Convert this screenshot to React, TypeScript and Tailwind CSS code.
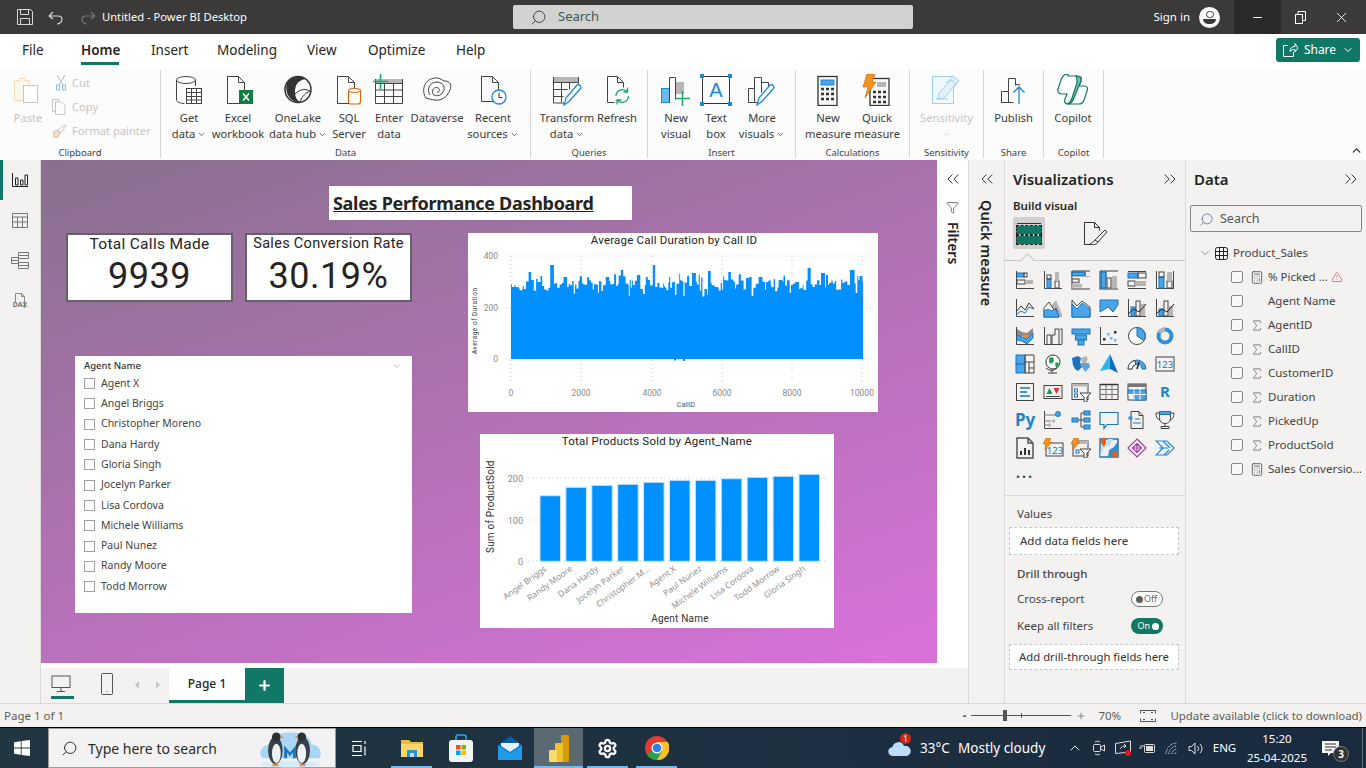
import type { ReactNode } from "react"
import { ChevronDown, ChevronUp, Minus, X, Plus, Search, ChevronsLeft, ChevronsRight, Filter, Sigma, Calculator, TriangleAlert, Settings } from "lucide-react"

const INK = "#444"
const BLUE = "#4aa5e8"
const GRAY = "#b8b6b4"

const Ic = ({ children, w = 32, h = 32 }: { children: ReactNode; w?: number; h?: number }) => (
  <svg width={w} height={h} viewBox={`0 0 ${w} ${h}`} fill="none" stroke={INK} strokeWidth="1">
    {children}
  </svg>
)

const ribbonIcons: Record<string, ReactNode> = {
  paste: (
    <Ic>
      <path d="M2.5 6.5h5v-2h5v2h5v5h-6v15h-9z" stroke="#f6dcb8" fill="#fdf6ec" />
      <rect x="11.5" y="11.5" width="14" height="17" stroke="#c8c6c4" fill="#fff" />
    </Ic>
  ),
  getData: (
    <Ic>
      <ellipse cx="13" cy="6" rx="9.5" ry="3.5" />
      <path d="M3.5 6v20c0 2 4 3.5 8 3.5M22.5 6v6" />
      <rect x="13.5" y="14.5" width="15" height="15" fill="#fff" />
      <path d="M13.5 18.5h15M13.5 22.5h15M13.5 26h15M18.5 14.5v15M23.5 14.5v15" />
    </Ic>
  ),
  excel: (
    <Ic>
      <path d="M5.5 2.5h11l6 6v21h-17zM16.5 2.5v6h6" />
      <rect x="17" y="16" width="14" height="14" fill="#107c41" stroke="none" />
      <path d="M21 19.5l6 7M27 19.5l-6 7" stroke="#fff" strokeWidth="1.6" />
    </Ic>
  ),
  onelake: (
    <Ic>
      <circle cx="16" cy="15.5" r="13" stroke="#333" strokeWidth="1.5" />
      <path d="M5 9C9 2 20 1 24 5 16 6 13 11 13 18 13 24 16 27 18 28 9 29 2 19 5 9z" fill="#333" stroke="none" />
      <path d="M13 20c6-6 11-5 15-3M18 28c2-6 6-9 10-11" stroke="#333" />
    </Ic>
  ),
  sql: (
    <Ic>
      <path d="M4.5 2.5h11l6 6v21h-17zM15.5 2.5v6h6" />
      <rect x="15.5" y="15" width="12" height="15" rx="2.5" fill="#fff" stroke="#d9660b" strokeWidth="1.2" />
      <ellipse cx="21.5" cy="16.5" rx="6" ry="2" fill="#fff" stroke="#d9660b" />
    </Ic>
  ),
  enter: (
    <Ic>
      <rect x="2.5" y="5" width="27" height="4" fill={GRAY} stroke="none" />
      <path d="M2.5 9.5h27v20h-27zM2.5 16h27M2.5 22.5h27M11.5 9.5v20M20.5 9.5v20M2.5 5v5M29.5 5v5" />
      <path d="M7.5 0v15M0 7.5h15" stroke="#17a86b" strokeWidth="1.6" />
    </Ic>
  ),
  dataverse: (
    <Ic>
      <path d="M5 24C0 17 3 5 14 4c6-.5 7 3 10 3 5 0 7 4 5 9-3 8-10 11-15 10-4-.7-6-1-9-2z" />
      <path d="M9 21c-4-6 0-13 7-13 6 0 9 6 6 10-2 4-8 5-10 2-2-4 2-8 5-6 3 1 1 5-1 4" />
    </Ic>
  ),
  recent: (
    <Ic>
      <path d="M4.5 2.5h11l6 6v19h-17zM15.5 2.5v6h6" />
      <circle cx="22" cy="23" r="7" fill="#fff" stroke="#1b8ad3" strokeWidth="1.3" />
      <path d="M22 19v4.5h3.5" stroke="#333" />
    </Ic>
  ),
  transform: (
    <Ic>
      <rect x="2" y="3" width="26" height="5" fill={GRAY} stroke="none" />
      <path d="M2.5 3v26h12M2.5 8.5h25v7M2.5 15.5h14M2.5 22.5h10M10.5 8.5v20M18.5 8.5v7M27.5 3v5" />
      <path d="M13 31l2-7L26 11c1.5-1.5 5 1.5 3.5 3.5L18 27.5z" fill="#fff" stroke="#1b8ad3" strokeWidth="1.3" />
    </Ic>
  ),
  refresh: (
    <Ic>
      <path d="M6.5 2.5h10l6 6v5M16.5 2.5v6h6M6.5 2.5v26h7" />
      <path d="M15 22a6.5 6.5 0 0 1 11-4.5M27.5 22a6.5 6.5 0 0 1-11 4.5M26.5 13.500v4.5h-4M16 30.5V26h4.5" stroke="#17a86b" strokeWidth="1.3" />
    </Ic>
  ),
  newVisual: (
    <Ic>
      <rect x="1.5" y="14.5" width="8" height="14" fill="#6bb7ee" stroke="#1b8ad3" />
      <path d="M9.5 28.5V3.5h6v22" />
      <rect x="16" y="8" width="8" height="12" fill={GRAY} stroke="none" />
      <path d="M22.5 17v15M15 24.5h15" stroke="#17a86b" strokeWidth="1.5" />
    </Ic>
  ),
  textBox: (
    <svg width="32" height="32" viewBox="0 0 32 32" fill="none">
      <rect x="2.5" y="2.5" width="27" height="27" stroke="#333" />
      <rect x="0" y="0" width="4" height="4" fill="#1b8ad3" />
      <rect x="28" y="0" width="4" height="4" fill="#1b8ad3" />
      <rect x="0" y="28" width="4" height="4" fill="#1b8ad3" />
      <rect x="28" y="28" width="4" height="4" fill="#1b8ad3" />
      <text x="16" y="23" textAnchor="middle" fontSize="20" fill="#1b8ad3" fontFamily="Liberation Sans">A</text>
    </svg>
  ),
  moreVisuals: (
    <Ic>
      <path d="M2.5 28.5v-14h6v14zM8.5 14.5v-11h7v15M15.5 8.5h7v4M8.5 28.5h5" />
      <path d="M11 31l2-7L24 11c1.5-1.5 5 1.5 3.5 3.5L16 27.5z" fill="#fff" stroke="#1b8ad3" strokeWidth="1.3" />
    </Ic>
  ),
  newMeasure: (
    <Ic>
      <rect x="6" y="2.5" width="19" height="29" stroke="#333" strokeWidth="1.3" />
      <rect x="9" y="6" width="13" height="5" fill="#4aa5e8" stroke="#1b8ad3" />
      <path d="M9 15h3M14 15h3M19 15h3M9 20h3M14 20h3M19 20h3M9 25h3M14 25h3M19 25h3" stroke="#333" strokeWidth="2.5" />
    </Ic>
  ),
  quickMeasure: (
    <Ic>
      <rect x="9" y="4.5" width="19" height="27" stroke="#333" strokeWidth="1.3" />
      <rect x="16" y="8" width="9" height="5" fill={GRAY} stroke="none" />
      <path d="M12 18h3M17 18h3M22 18h3M12 23h3M17 23h3M22 23h3M12 28h3M17 28h3M22 28h3" stroke="#333" strokeWidth="2.5" />
      <path d="M6 0h8l-3 8h4L4 24l3-11H2z" fill="#f7941d" stroke="#b95e00" strokeWidth="0.6" />
    </Ic>
  ),
  sensitivity: (
    <Ic>
      <rect x="1.5" y="2.5" width="21" height="27" stroke="#9dd0ef" fill="#f2f9fd" />
      <path d="M8 19L20 6l5 4-12 14-6 1zM15 9l7-7 6 5-6 7" stroke="#9dd0ef" fill="#e2f2fb" />
      <path d="M5 25h12" stroke="#9dd0ef" />
    </Ic>
  ),
  publish: (
    <Ic>
      <path d="M3.5 28.5v-11h7v11zM10.5 17.5v-13h7v7M17.5 10.5h4v1M3.5 28.5h12" />
      <path d="M21 30V13M15.5 18.5L21 13l5.5 5.5" stroke="#1b8ad3" strokeWidth="1.3" />
    </Ic>
  ),
  copilot: (
    <svg width="34" height="32" viewBox="0 0 34 32" fill="none" stroke="#117865" strokeWidth="1.2">
      <path d="M12 2h10c3 0 4 2 3 5l-2 5h5c3 0 4 2 3 5l-3 9c-1 3-3 4-5 4H12c-3 0-4-2-3-5l2-5H6c-3 0-5-2-4-5l3-9c1-3 3-6 7-6z" fill="#fff" />
      <path d="M20 2c3 0 6 2 5 5l-7 17c-1 3-3 6-7 6 3-1 4-3 5-6l5-15c0-3 0-6-1-7z" fill="#7ebfa8" />
    </svg>
  ),
}

const RibbonBtn = ({ w, icon, lines, chev, dim }: { w: number; icon: string; lines: string[]; chev?: boolean; dim?: boolean }) => (
  <div style={{ width: w }} className={`flex flex-col items-center shrink-0 ${dim ? "text-[#c8c6c4]" : "text-[#3b3a39]"}`}>
    <div className="h-[40px] flex items-center justify-center">{ribbonIcons[icon]}</div>
    {lines.map((l, i) => (
      <div key={i} className="h-4 leading-4 text-[11.2px] whitespace-nowrap flex items-center gap-[2px]">
        {l}
        {chev && i === lines.length - 1 && <ChevronDown size={9} strokeWidth={2} />}
      </div>
    ))}
  </div>
)

const Group = ({ w, label, children }: { w: number; label: string; children: ReactNode }) => (
  <div style={{ width: w }} className="h-[88px] shrink-0 flex flex-col border-r border-[#d9d7d5]">
    <div className="flex-1 flex items-start">{children}</div>
    <div className="h-[10px] text-center text-[9.5px] leading-[10px] text-[#444]">{label}</div>
  </div>
)

const tabs: [string, number][] = [
  ["File", 59],
  ["Home", 70],
  ["Insert", 66],
  ["Modeling", 90],
  ["View", 61],
  ["Optimize", 88],
  ["Help", 60],
]

function TitleBar() {
  return (
    <div className="h-[34px] bg-[#3b3a39] flex items-center text-white shrink-0">
      <div className="w-[48px] pl-[17px]">
        <svg width="16" height="16" viewBox="0 0 16 16" fill="none" stroke="#d8d8d8">
          <path d="M.5.5h13l2 2v13H.5zM3.5.5v5h8v-5M3.5 15.5v-6h9v6" />
        </svg>
      </div>
      <div className="w-[32px]">
        <svg width="16" height="16" viewBox="0 0 16 16" fill="none" stroke="#d8d8d8" strokeWidth="1.2">
          <path d="M1 7l4-4M1 7l4 3M1 7h9c3 0 4 2 4 3.5S12 15 9 15" />
        </svg>
      </div>
      <div className="w-[22px]">
        <svg width="16" height="16" viewBox="0 0 16 16" fill="none" stroke="#777" strokeWidth="1.2">
          <path d="M15 7l-4-4M15 7l-4 3M15 7H6c-3 0-4 2-4 3.5S4 15 7 15" />
        </svg>
      </div>
      <div className="w-[411px] text-[11.2px]">Untitled - Power BI Desktop</div>
      <div className="w-[400px] h-[24px] bg-[#d2d2d0] rounded-[2px] flex items-center pl-[17px] gap-[11px] text-[13px] text-[#3a5a58]">
        <Search size={17} strokeWidth={1.2} className="text-[#333] -scale-x-100" />
        Search
      </div>
      <div className="w-[277px] text-right text-[11.5px]">Sign in</div>
      <div className="w-[30px] pl-[9px]">
        <div className="w-[21px] h-[21px] rounded-full bg-white flex flex-col items-center justify-center gap-[1px]">
          <div className="w-[8px] h-[7px] rounded-full border border-[#3b3a39]" />
          <div className="w-[13px] h-[5px] rounded-b-full bg-[#3b3a39]" />
        </div>
      </div>
      <div className="ml-[14px] w-[47px] h-full bg-[#2b2a29] flex items-center justify-center">
        <Minus size={13} />
      </div>
      <div className="w-[38px] flex justify-center">
        <svg width="11" height="13" viewBox="0 0 11 13" fill="none" stroke="#fff">
          <rect x="0.5" y="3.5" width="7" height="9" />
          <path d="M3 3V.5h7.5v9H8" />
        </svg>
      </div>
      <div className="flex-1 flex justify-center pr-[3px]">
        <X size={17} strokeWidth={1.2} />
      </div>
    </div>
  )
}

function Ribbon() {
  return (
    <div className="h-[126px] bg-[#fcfcfc] shrink-0 relative">
      <div className="h-[36px] flex items-center bg-white pl-[22px] pb-[4px]">
        {tabs.map(([t, w]) => (
          <div key={t} style={{ width: w }} className="shrink-0 text-[13.5px] text-[#252423] relative leading-[32px]">
            <span className={t === "Home" ? "font-semibold inline-block" : ""}>
              {t}
              {t === "Home" && <span className="absolute left-0 top-[28px] w-[38px] h-[3px] bg-[#117865]" />}
            </span>
          </div>
        ))}
        <div className="ml-auto mr-[6px] w-[84px] h-[24px] bg-[#117865] rounded-[3px] flex items-center justify-center gap-[6px] text-white text-[12px]">
          <svg width="16" height="16" viewBox="0 0 16 16" fill="none" stroke="#fff">
            <path d="M6 3.5H1.5v11h10V10M8 9.5C8 6 10 4.5 13 4.5V1.5l3 4.5-3 4V7.5c-2 0-4 .5-5 2z" />
          </svg>
          Share
          <ChevronDown size={12} />
        </div>
      </div>
      <div className="flex">
        <Group w={161} label="Clipboard">
          <RibbonBtn w={56} icon="paste" lines={["Paste"]} dim />
          <div className="text-[11.2px] text-[#c8c6c4] pt-[4px] flex flex-col gap-[6px]">
            <div className="h-[18px] flex items-center gap-[6px]">
              <svg width="10" height="16" viewBox="0 0 10 16" fill="none" stroke="#bbb">
                <path d="M1 0l6 10M9 0L3 10" />
                <rect x="0.5" y="10" width="3" height="5" stroke="#8ac2e8" />
                <rect x="6.5" y="10" width="3" height="5" stroke="#8ac2e8" />
              </svg>
              Cut
            </div>
            <div className="h-[18px] flex items-center gap-[6px] -ml-[4px]">
              <svg width="14" height="16" viewBox="0 0 14 16" fill="none" stroke="#c8c6c4">
                <path d="M3.5 12.5H.5v-12h6v2M3.5 3h6L13 6.5v9H3.5z" />
              </svg>
              Copy
            </div>
            <div className="h-[18px] flex items-center gap-[5px] -ml-[4px]">
              <svg width="15" height="15" viewBox="0 0 15 15" fill="none" stroke="#c8c6c4">
                <path d="M1 8l4-2 3 3-2 4c-2 1-4 0-5-1 1 0 2-1 0-4z" fill="#f6dcb8" />
                <path d="M6 6l7-5 1 1-5 7z" />
              </svg>
              Format painter
            </div>
          </div>
        </Group>
        <Group w={370} label="Data">
          <div className="w-[4px]" />
          <RibbonBtn w={48} icon="getData" lines={["Get", "data"]} chev />
          <RibbonBtn w={50} icon="excel" lines={["Excel", "workbook"]} />
          <RibbonBtn w={70} icon="onelake" lines={["OneLake", "data hub"]} chev />
          <RibbonBtn w={32} icon="sql" lines={["SQL", "Server"]} />
          <RibbonBtn w={48} icon="enter" lines={["Enter", "data"]} />
          <RibbonBtn w={48} icon="dataverse" lines={["Dataverse"]} />
          <RibbonBtn w={64} icon="recent" lines={["Recent", "sources"]} chev />
        </Group>
        <Group w={117} label="Queries">
          <div className="w-[7px]" />
          <RibbonBtn w={58} icon="transform" lines={["Transform", "data"]} chev />
          <RibbonBtn w={42} icon="refresh" lines={["Refresh"]} />
        </Group>
        <Group w={148} label="Insert">
          <div className="w-[7px]" />
          <RibbonBtn w={42} icon="newVisual" lines={["New", "visual"]} />
          <RibbonBtn w={38} icon="textBox" lines={["Text", "box"]} />
          <RibbonBtn w={54} icon="moreVisuals" lines={["More", "visuals"]} chev />
        </Group>
        <Group w={114} label="Calculations">
          <div className="w-[7px]" />
          <RibbonBtn w={50} icon="newMeasure" lines={["New", "measure"]} />
          <RibbonBtn w={48} icon="quickMeasure" lines={["Quick", "measure"]} />
        </Group>
        <Group w={74} label="Sensitivity">
          <RibbonBtn w={73} icon="sensitivity" lines={["Sensitivity", ""]} chev dim />
        </Group>
        <Group w={60} label="Share">
          <RibbonBtn w={59} icon="publish" lines={["Publish"]} />
        </Group>
        <Group w={60} label="Copilot">
          <RibbonBtn w={58} icon="copilot" lines={["Copilot"]} />
        </Group>
      </div>
      <ChevronUp size={13} strokeWidth={2.5} className="absolute right-[3px] top-[110px] text-[#333]" />
    </div>
  )
}

function LeftRail() {
  return (
    <div className="w-[41px] shrink-0 bg-[#f3f2f1] border-r border-[#dcdad8] flex flex-col items-center relative">
      <div className="absolute left-0 top-0 w-[3px] h-[40px] bg-[#117865]" />
      <div className="h-[40px] flex items-center">
        <svg width="16" height="14" viewBox="0 0 16 14" fill="none" stroke="#222">
          <path d="M.5 0v13.5H16M3.5 12V5H6v7zM8.5 12V7H11v5zM13 12V2h2.5v10z" />
        </svg>
      </div>
      <div className="h-[40px] flex items-center">
        <svg width="16" height="15" viewBox="0 0 16 15" fill="none" stroke="#777">
          <path d="M.5.5h15v14H.5zM.5 4h15M.5 9h15M5.5 4v10.5M10.5 4v10.5" />
        </svg>
      </div>
      <div className="h-[40px] flex items-center">
        <svg width="18" height="18" viewBox="0 0 18 18" fill="none" stroke="#777">
          <path d="M7.5 1.5h10v6h-10zM.5 6.5h7v6h-7zM7.5 11.5h10v6h-10zM7.5 4.5h10M.5 9.5h7M7.5 14.5h10" />
        </svg>
      </div>
      <div className="h-[40px] flex flex-col items-center justify-center relative">
        <svg width="14" height="15" viewBox="0 0 14 15" fill="none" stroke="#888">
          <path d="M2.5 9V.5h6l3 3V15M8.5.5v3h3" />
        </svg>
        <span className="absolute top-[21px] text-[7px] font-bold text-[#777] leading-none">DAX</span>
      </div>
    </div>
  )
}

const agents = ["Agent X", "Angel Briggs", "Christopher Moreno", "Dana Hardy", "Gloria Singh", "Jocelyn Parker", "Lisa Cordova", "Michele Williams", "Paul Nunez", "Randy Moore", "Todd Morrow"]

const skyPeaks: [number, number][] = [[17, 39], [40, 32], [53, 44], [96, 44], [110, 37], [127, 42], [142, 32], [167, 41], [182, 40], [198, 38], [218, 39], [236, 45], [249, 44], [269, 47], [298, 35], [310, 40], [340, 37], [349, 43]]

function skyline() {
  let seed = 4127
  const rnd = () => {
    seed = (seed * 16807) % 2147483647
    return seed / 2147483647
  }
  let d = "M43 126"
  let x = 0
  while (x < 352) {
    const step = Math.min(0.8 + rnd() * 2, 352 - x)
    const r = rnd()
    let top = r < 0.14 ? 41 + rnd() * 6 : r < 0.93 ? 47 + rnd() * 11 : 58 + rnd() * 6
    for (const [px, py] of skyPeaks) {
      if (Math.abs(px - x) < 1.5) top = py
    }
    d += `V${top.toFixed(1)}H${(43 + x + step).toFixed(1)}`
    x += step
  }
  return d + "V126Z"
}

const LineX = [43, 113, 184, 254, 324, 394]
const fontDin = "font-['Roboto',sans-serif]"

function DurationChart() {
  return (
    <div className="absolute left-[427px] top-[73px] w-[410px] h-[179px] bg-white">
      <svg width="410" height="179" viewBox="0 0 410 179" fontFamily="Roboto, sans-serif">
        <text x="206" y="11" textAnchor="middle" fontSize="11.5" letterSpacing="0.2" fill="#252423">Average Call Duration by Call ID</text>
        {[23, 75, 126].map((y) => (
          <line key={y} x1="38" x2="404" y1={y} y2={y} stroke="#ccc" strokeDasharray="1 3" />
        ))}
        {LineX.map((x) => (
          <line key={x} x1={x} x2={x} y1="23" y2="151" stroke="#ccc" strokeDasharray="1 3" />
        ))}
        <path d={skyline()} fill="#0090ff" />
        <rect x="206" y="126" width="2" height="1.5" fill="#0090ff" />
        <rect x="215" y="126" width="2" height="2" fill="#0090ff" />
        {[[23, "400"], [75, "200"], [126, "0"]].map(([y, t]) => (
          <text key={t} x="30" y={Number(y) + 3} textAnchor="end" fontSize="8.5" fill="#8a8a8a">{t}</text>
        ))}
        {["0", "2000", "4000", "6000", "8000", "10000"].map((t, i) => (
          <text key={t} x={LineX[i]} y="163" textAnchor="middle" fontSize="8.5" fill="#8a8a8a">{t}</text>
        ))}
        <text x="218" y="174" textAnchor="middle" fontSize="7" fill="#555">CallID</text>
        <text transform="translate(9 121) rotate(-90)" fontSize="6.5" fill="#444" textLength="66">Average of Duration</text>
      </svg>
    </div>
  )
}

const bars: [string, number][] = [
  ["Angel Briggs", 495.7],
  ["Randy Moore", 487.3],
  ["Dana Hardy", 485.3],
  ["Jocelyn Parker", 484.3],
  ["Christopher M...", 482.3],
  ["Agent X", 480.3],
  ["Paul Nunez", 480.3],
  ["Michele Williams", 478.7],
  ["Lisa Cordova", 477.3],
  ["Todd Morrow", 476.3],
  ["Gloria Singh", 474.3],
]

function ProductsChart() {
  return (
    <div className="absolute left-[439px] top-[274px] w-[354px] h-[194px] bg-white">
      <svg width="354" height="194" viewBox="0 0 354 194" fontFamily="Roboto, sans-serif">
        <text x="177" y="11" textAnchor="middle" fontSize="11.5" letterSpacing="0.2" fill="#252423">Total Products Sold by Agent_Name</text>
        {[[44, "200"], [86, "100"], [127, "0"]].map(([y, t]) => (
          <g key={t}>
            <line x1="48" x2="345" y1={y} y2={y} stroke="#ccc" strokeDasharray="1 3" />
            <text x="43" y={Number(y) + 3.5} textAnchor="end" fontSize="9" fill="#8a8a8a">{t}</text>
          </g>
        ))}
        {bars.map(([name, top], i) => {
          const x = 60 + i * 25.9
          return (
            <g key={name}>
              <rect x={x} y={top - 434} width="20.5" height={561.3 - top} fill="#0090ff" stroke="#c6e6ff" strokeWidth="1" />
              <text transform={`translate(${x + 7} 136) rotate(-36)`} textAnchor="end" fontSize="8.5" fill="#8f8f8f" fontFamily="Noto Sans, sans-serif">{name}</text>
            </g>
          )
        })}
        <text transform="translate(14 119) rotate(-90)" fontSize="10" letterSpacing="0.2" fill="#333">Sum of ProductSold</text>
        <text x="200" y="188" textAnchor="middle" fontSize="10" letterSpacing="0.2" fill="#333">Agent Name</text>
      </svg>
    </div>
  )
}

const KpiCard = ({ left, title, value, titleSize }: { left: string; title: string; value: string; titleSize: string }) => (
  <div className={`absolute top-[73px] h-[69px] w-[167px] bg-white border-2 border-[#64606a] flex flex-col items-center ${left} ${fontDin}`}>
    <div className={`${titleSize} leading-[18px] text-[#252423] tracking-[0.3px]`}>{title}</div>
    <div className="mt-[2px] text-[36px] leading-[42px] text-[#252423] tracking-[0.5px]">{value}</div>
  </div>
)

function Canvas() {
  return (
    <div className="flex-1 relative bg-[linear-gradient(160deg,#88718d,#da71db)]">
      <div className="absolute left-[288px] top-[26px] w-[303px] h-[34px] bg-white pl-[4px] flex items-center">
        <span className="text-[18px] font-bold underline text-[#252423] tracking-[-0.3px] whitespace-nowrap">Sales Performance Dashboard</span>
      </div>
      <KpiCard left="left-[25px]" title="Total Calls Made" value="9939" titleSize="text-[15.5px]" />
      <KpiCard left="left-[204px]" title="Sales Conversion Rate" value="30.19%" titleSize="text-[14.5px]" />
      <div className="absolute left-[34px] top-[196px] w-[337px] h-[257px] bg-white pl-[9px] pt-[4px]">
        <div className="flex items-center justify-between h-[12px] pr-[9px] text-[9.5px] font-medium text-[#333]">
          Agent Name
          <ChevronDown size={12} strokeWidth={1} className="text-[#777]" />
        </div>
        <div className="flex flex-col mt-[1.5px]">
          {agents.map((a) => (
            <div key={a} className="h-[20.3px] flex items-center gap-[6px] text-[10.5px] text-[#444]">
              <span className="w-[11px] h-[11px] border border-[#a39ea8] shrink-0" />
              {a}
            </div>
          ))}
        </div>
      </div>
      <DurationChart />
      <ProductsChart />
    </div>
  )
}

function PageTabs() {
  return (
    <div className="h-[35px] bg-[#f3f2f1] flex items-stretch shrink-0 pl-[10px]">
      <div className="w-[24px] flex items-center relative pb-[3px]">
        <svg width="20" height="18" viewBox="0 0 20 18" fill="none" stroke="#555">
          <rect x="1" y="1" width="18" height="11.5" fill="#f3f2f1" />
          <path d="M10 13v3M6 16.5h8" />
        </svg>
        <span className="absolute bottom-[4px] left-0 w-[23px] h-[3px] bg-[#117865]" />
      </div>
      <div className="w-[12px] ml-[26px] flex items-center pb-[4px]">
        <svg width="12" height="22" viewBox="0 0 12 22" fill="none" stroke="#555">
          <rect x="0.5" y="0.5" width="11" height="21" rx="1" />
          <path d="M5.5 18.5h1" />
        </svg>
      </div>
      <div className="w-[56px] flex items-center gap-[17px] pl-[22px] pb-[1px]">
        <span className="w-0 h-0 border-y-[4px] border-y-transparent border-r-[4px] border-r-[#c8c6c4]" />
        <span className="w-0 h-0 border-y-[4px] border-y-transparent border-l-[4px] border-l-[#c8c6c4]" />
      </div>
      <div className="w-[76px] bg-white border-b-[3px] border-[#117865] flex items-center justify-center text-[12px] font-medium text-[#252423]">Page 1</div>
      <div className="w-[39px] bg-[#117865] flex items-center justify-center text-white">
        <Plus size={15} strokeWidth={3.5} />
      </div>
    </div>
  )
}

const FI = ({ children }: { children: ReactNode }) => (
  <svg width="20" height="20" viewBox="0 0 20 20" fill="none" stroke="#444" strokeWidth="1">
    {children}
  </svg>
)
const ax = <path d="M1.5 1v17.5H19" />
const bx = { fill: BLUE, stroke: "#1b75bc" }
const gx = { fill: GRAY, stroke: "none" }

const gallery: ReactNode[] = [
  <FI>{ax}<rect x="2" y="3" width="7" height="4" {...bx} /><rect x="9" y="3" width="3" height="4" /><rect x="2" y="10" width="8" height="4" /><rect x="10" y="10" width="8" height="4" {...gx} /></FI>,
  <FI>{ax}<rect x="4" y="9" width="4" height="9" {...bx} /><rect x="4" y="5" width="4" height="4" /><rect x="12" y="11" width="4" height="7" /><rect x="12" y="2" width="4" height="9" {...gx} /></FI>,
  <svg width="20" height="20" viewBox="0 0 20 20" fill="none" stroke="#777" strokeWidth="1.5"><path d="M1 1v18h18M1 1h18" /><rect x="1" y="2" width="13" height="4" {...bx} /><rect x="1" y="6" width="18" height="1" {...gx} /><rect x="1" y="9" width="7" height="3.5" /><rect x="1" y="14" width="10" height="3.5" {...gx} /></svg>,
  <svg width="20" height="20" viewBox="0 0 20 20" fill="none" stroke="#777" strokeWidth="1.5"><path d="M1 1v18h18M1 1h18" /><rect x="2" y="2" width="5" height="16" {...bx} /><rect x="8" y="8" width="4" height="10" /><rect x="13" y="6" width="5" height="12" {...gx} /></svg>,
  <FI><path d="M1 1.5h18M1 18.5h18" /><rect x="1" y="3" width="10" height="5" {...bx} /><rect x="11" y="3" width="8" height="5" /><rect x="1" y="11" width="7" height="5" /><rect x="8" y="11" width="11" height="5" {...gx} /></FI>,
  <FI><path d="M1.5 1v18M18.5 1v18M1 18.5h18" /><rect x="4" y="7" width="5" height="11" {...bx} /><rect x="4" y="2" width="5" height="5" /><rect x="12" y="11" width="5" height="7" /><rect x="12" y="2" width="5" height="9" {...gx} /></FI>,

  <FI>{ax}<path d="M1 14l5-6 4 4 4-7 5 6" stroke="#333" /><path d="M1 17l5-4 4 2 4-6 5 2" stroke="#1b75bc" /></FI>,
  <FI><path d="M8 8l5-6 6 14v3h-8z" {...gx} /><path d="M1 19v-9l5-6 5 8 2-2 3 9z" fill="#fff" stroke="#444" /><path d="M1 19v-6l4-2 3 2 5-2 3 8z" {...bx} /></FI>,
  <FI><path d="M1 2l5 6 5-5 8 6v10H1z" fill="#fff" /><path d="M1 6l5 5 5-6 8 6v8H1z" {...bx} /></FI>,
  <FI><path d="M1 2h18v17H1z" fill="#fff" stroke="none" /><path d="M1 2h18v5l-5 7-5-5-8 5z" {...bx} /><path d="M1 18.5h18" /></FI>,
  <FI>{ax}<rect x="4" y="9" width="4" height="9" {...bx} /><rect x="9" y="3" width="4" height="15" /><rect x="14" y="6" width="4" height="12" {...gx} /><path d="M1 16l6-5 5 3 7-8" stroke="#222" /></FI>,
  <FI>{ax}<rect x="4" y="11" width="4" height="7" {...bx} /><rect x="9" y="3" width="4" height="15" /><rect x="14" y="8" width="4" height="10" {...gx} /><path d="M1 16l6-5 5 3 7-8" stroke="#222" /></FI>,

  <FI>{ax}<path d="M2 3l5 3 5 1 6-5v5l-6 5-5-2-5 3z" fill="#8a8a8a" stroke="none" /><path d="M2 9l5 2 5 2 6-6v5l-6 6-5-3-5-1z" {...bx} /><path d="M8 9l5-1v4l-4 0z" fill="#e8873a" stroke="none" /></FI>,
  <FI>{ax}<path d="M4 18V9h4v9M9 18V9h3V3h4v15M17 3h2v15" /></FI>,
  <FI><rect x="1" y="3" width="18" height="5" {...bx} /><rect x="4.5" y="9" width="11" height="5" {...bx} /><rect x="7" y="14" width="6" height="5" {...bx} /></FI>,
  <FI>{ax}<rect x="4" y="12" width="2.5" height="2.5" fill="#333" stroke="none" /><rect x="8" y="7" width="2.5" height="2.5" fill="#6fbcee" stroke="none" /><rect x="11" y="11" width="2.5" height="2.5" fill="#6fbcee" stroke="none" /><rect x="15" y="5" width="2.5" height="2.5" fill="#333" stroke="none" /><rect x="15" y="13" width="2.5" height="2.5" fill="#6fbcee" stroke="none" /></FI>,
  <FI><circle cx="10" cy="10" r="8.5" fill="#fff" /><path d="M10 10V1.5a8.5 8.5 0 0 1 7 13z" {...bx} /></FI>,
  <FI><circle cx="10" cy="10" r="6.5" stroke="#2f8fd6" strokeWidth="4" /><path d="M3 6a8.5 8.5 0 0 1 7-4.5V5A5 5 0 0 0 6 8z" {...gx} /></FI>,

  <FI><rect x="1" y="1" width="9" height="9" {...bx} /><rect x="1" y="10" width="9" height="9" {...bx} /><path d="M10 1h9v18h-9zM10 8h9M14 8v11M14 14h5" /></FI>,
  <FI><circle cx="10" cy="8" r="7" fill="#fff" stroke="#333" /><path d="M6 4l4-1 1 4-3 3-2-2zM12 9l3-1 1 3-3 3z" fill="#1f9a52" stroke="none" /><path d="M3 14c3 3 8 3 11 0M9 16v3M5 19h9" stroke="#333" /></FI>,
  <FI><path d="M1 4l6-2 3 2-1 5 2 4-4 4-3-2-2-4z" fill="#1b75bc" stroke="none" /><path d="M10 4l5-2 2 3-2 4-4 0z" {...gx} /><path d="M9 9h9l1 4-5 5-3-5z" fill="#5aa6dd" stroke="none" /></FI>,
  <svg width="20" height="20" viewBox="0 0 20 20"><path d="M11 0L19 19l-8-4z" fill="#0a6fbf" /><path d="M11 0L1 17l10-2z" fill="#33b4e4" /></svg>,
  <FI><path d="M1 15a9 9 0 0 1 18 0h-4a5 5 0 0 0-10 0z" {...bx} /><path d="M1 15a9 9 0 0 1 7-8.5l1 4a5 5 0 0 0-4 4.5z" fill="#fff" stroke="#444" /><path d="M10 15l2-7" stroke="#222" strokeWidth="1.5" /></FI>,
  <svg width="20" height="20" viewBox="0 0 20 20" fill="none" stroke="#444"><rect x="1" y="3" width="18" height="14" /><text x="10" y="14" textAnchor="middle" fontSize="9.5" fill="#1b75bc" stroke="none" fontFamily="Noto Sans">123</text></svg>,

  <FI><rect x="1.5" y="1.5" width="17" height="17" /><path d="M5 6h10M5 10h7M5 14h10" stroke="#1b75bc" strokeWidth="1.6" /></FI>,
  <FI><rect x="1" y="3.5" width="18" height="13" /><path d="M6.5 6l3 6h-6z" fill="#1f9a52" stroke="none" /><path d="M10.5 6h6l-3 6z" fill="#d13438" stroke="none" /><path d="M3 14.5h14" stroke="#444" /></FI>,
  <FI><rect x="1" y="1.5" width="16" height="16" /><rect x="1" y="1.5" width="16" height="3" {...gx} /><rect x="3.5" y="7" width="3" height="3" stroke="#1b75bc" /><rect x="3.5" y="12" width="3" height="3" stroke="#1b75bc" /><path d="M9 11h11l-4 4v5h-3v-5z" fill="#fff" /></FI>,
  <FI><rect x="1" y="2.5" width="18" height="15" /><path d="M1 7.5h18M1 12.5h18M7 2.5v15M13 2.5v15" stroke="#777" /><path d="M1 2.5h18" stroke="#333" strokeWidth="1.5" /></FI>,
  <FI><rect x="1" y="2" width="18" height="16" /><rect x="1" y="2" width="18" height="3" fill="#777" stroke="none" /><rect x="7" y="8" width="12" height="10" {...bx} /><rect x="1" y="8" width="6" height="4.5" {...bx} /><path d="M7 5v13M13 5v13M1 12.5h18" stroke="#fff" /></FI>,
  <svg width="20" height="20" viewBox="0 0 20 20"><text x="10" y="15" textAnchor="middle" fontSize="15" fontWeight="700" fill="#1b87c9" fontFamily="Noto Sans">R</text></svg>,

  <svg width="20" height="20" viewBox="0 0 20 20" className="overflow-visible"><text x="10" y="16" textAnchor="middle" fontSize="17" fontWeight="700" fill="#1b87c9" fontFamily="Noto Sans">Py</text></svg>,
  <FI>{ax}<path d="M1 5h13M1 11h7M1 15h4" stroke="#777" /><circle cx="15" cy="4" r="2.5" {...bx} /><rect x="9" y="9.5" width="3" height="3" {...gx} /><rect x="5" y="13.5" width="3" height="3" {...gx} /></FI>,
  <FI><rect x="1" y="8" width="6" height="4" {...bx} /><path d="M7 10h3M10 3v14M10 3h3M10 10h3M10 17h3" /><rect x="13" y="1" width="6" height="4" {...bx} /><rect x="13" y="8" width="6" height="4" {...bx} /><rect x="13" y="15" width="6" height="4" {...bx} /></FI>,
  <svg width="20" height="20" viewBox="0 0 20 20" fill="none" stroke="#1b75bc" strokeWidth="1.2"><path d="M1 2.5h18v12H8l-3 4v-4H1z" /></svg>,
  <FI><path d="M4 1.5h8l4 4v13H4zM12 1.5v4h4" /><rect x="1.5" y="6.5" width="4" height="3" fill="#2f8fd6" stroke="none" /><path d="M8 9h5M6 13h8" stroke="#1b75bc" /></FI>,
  <FI><path d="M4.5 1.5h11v6c0 4-2 6-5.5 6s-5.5-2-5.5-6z" /><path d="M4.5 1.5h11v3h-11z" {...bx} /><path d="M4.5 3H1c0 4 1 6 4 7M15.5 3H19c0 4-1 6-4 7M10 13.5v3M6 18.5h8v-2H6z" /></FI>,

  <svg width="20" height="22" viewBox="0 0 20 22" fill="none" stroke="#555" strokeWidth="1.5"><path d="M2 1h11l5 5v15H2zM13 1v5h5" fill="#f3f2f1" /><path d="M6 18v-4M10 18v-7M14 18v-5" stroke="#333" strokeWidth="2" /></svg>,
  <svg width="22" height="20" viewBox="0 0 22 20" fill="none" stroke="#444"><rect x="4" y="5" width="17" height="13" /><text x="13" y="15.5" textAnchor="middle" fontSize="9.5" fill="#1b75bc" stroke="none" fontFamily="Noto Sans">123</text><path d="M4 0h5L7 4h3L3 12l1-6H1z" fill="#f7941d" stroke="#b95e00" strokeWidth="0.5" /></svg>,
  <svg width="22" height="20" viewBox="0 0 22 20" fill="none" stroke="#444"><rect x="3" y="3" width="15" height="15" /><rect x="3" y="3" width="15" height="3" {...gx} /><rect x="6" y="12" width="3" height="3" stroke="#1b75bc" /><path d="M10 11h11l-4 4v5h-3v-5z" fill="#fff" /><path d="M4 0h5L7 4h3L3 12l1-6H1z" fill="#f7941d" stroke="#b95e00" strokeWidth="0.5" /></svg>,
  <svg width="20" height="20" viewBox="0 0 20 20" fill="none"><rect x="1" y="1" width="18" height="18" stroke="#1b75bc" strokeWidth="1.5" /><path d="M9 19l1-7 5-3 4-6v16z" fill="#2f8fd6" /><path d="M1 19l4-9 6-2 3-7H9L7 5 2 8z" fill="#bfe0f5" /><path d="M2 0h5v5l-2 4-3-4z" fill="#e0620d" /><circle cx="16" cy="16" r="3" fill="#e0620d" /></svg>,
  <svg width="20" height="20" viewBox="0 0 20 20" fill="none" stroke="#a53ca8" strokeWidth="1.2"><path d="M10 1l9 9-9 9-9-9z" /><path d="M10 5.5l4.5 4.5-4.5 4.5L5.5 10zM5.5 10h9M10 5.5v9" /></svg>,
  <svg width="20" height="20" viewBox="0 0 20 20" fill="none" stroke="#1b87d9" strokeWidth="1.1"><path d="M1 3h11l7 7-7 7H1l7-7zM4 10h9M8 3l7 7M9 17l5-5" /></svg>,
]

const fields: { name: string; icon?: "calc" | "sigma"; warn?: boolean }[] = [
  { name: "% Picked ...", icon: "calc", warn: true },
  { name: "Agent Name" },
  { name: "AgentID", icon: "sigma" },
  { name: "CallID", icon: "sigma" },
  { name: "CustomerID", icon: "sigma" },
  { name: "Duration", icon: "sigma" },
  { name: "PickedUp", icon: "sigma" },
  { name: "ProductSold", icon: "sigma" },
  { name: "Sales Conversio...", icon: "calc" },
]

function VizPane() {
  return (
    <div className="w-[181px] shrink-0 bg-[#f3f2f1] border-r border-[#dcdad8]">
      <div className="h-[38px] pl-[8px] pr-[5px] flex items-center justify-between">
        <span className="text-[15px] font-semibold text-[#252423]">Visualizations</span>
        <ChevronsRight size={20} strokeWidth={1.2} className="text-[#333]" />
      </div>
      <div className="h-[16px] pl-[8px] text-[11.5px] leading-[16px] font-semibold text-[#252423]">Build visual</div>
      <div className="mt-[3px] ml-[8px] flex items-center gap-[38px]">
        <div className="w-[32px] h-[32px] bg-[#d2d0ce] rounded-[2px] flex flex-col items-center justify-center gap-[2px]">
          <div className="w-[24px] h-px bg-[#333]" />
          <div className="w-[24px] h-[8px] bg-[#117865] outline-1 outline-dashed outline-[#222]" />
          <div className="w-[24px] h-[8px] bg-[#117865] outline-1 outline-dashed outline-[#222]" />
        </div>
        <svg width="25" height="25" viewBox="0 0 25 25" fill="none" stroke="#333">
          <path d="M1.5 1.5h10l5 5v3M11.5 1.5v5h5M1.5 1.5v22h8" />
          <path d="M12 19L22 9l2 2-9 10M12 19c-2 1-2 3-5 4 3 1 7 1 8-2z" fill="#f3f2f1" />
        </svg>
      </div>
      <div className="h-[12px] border-b border-[#c8c6c4] relative">
        <span className="absolute left-[18px] top-[6px] w-[9px] h-[9px] rotate-45 bg-[#f3f2f1] border-l border-t border-[#c8c6c4]" />
      </div>
      <div className="mt-[5px] pl-[6px] grid grid-cols-[repeat(6,28px)] auto-rows-[28px]">
        {gallery.map((g, i) => (
          <div key={i} className="flex items-center justify-center">{g}</div>
        ))}
        <div className="flex items-center justify-center text-[#1b4f8a] text-[14px] font-bold tracking-[2px] pb-[8px]">...</div>
      </div>
      <div className="h-[6px] border-b border-[#dcdad8]" />
      <div className="pt-[10px] pl-[12px] text-[11.5px] leading-[16px] text-[#444]">Values</div>
      <div className="mt-[5px] mx-[4px] w-[170px] h-[28px] bg-white border border-dashed border-[#c8c6c4] flex items-center pl-[10px] text-[11.5px] text-[#333]">Add data fields here</div>
      <div className="mt-[11px] pl-[12px] h-[16px] leading-[16px] text-[11.5px] font-medium text-[#444]">Drill through</div>
      <div className="mt-[5px] h-[24px] pl-[12px] pr-[22px] flex items-center justify-between text-[11.5px] text-[#444]">
        Cross-report
        <div className="w-[32px] h-[16px] rounded-full bg-white border border-[#777] flex items-center pl-[4px] gap-[1px] text-[9px] text-[#666]">
          <span className="w-[7px] h-[7px] rounded-full bg-[#605e5c]" />
          Off
        </div>
      </div>
      <div className="mt-[3px] h-[24px] pl-[12px] pr-[22px] flex items-center justify-between text-[11.5px] text-[#444]">
        Keep all filters
        <div className="w-[32px] h-[16px] rounded-full bg-[#117865] flex items-center justify-end pr-[4px] gap-[2px] text-[9px] text-white">
          On
          <span className="w-[7px] h-[7px] rounded-full bg-white" />
        </div>
      </div>
      <div className="mt-[6px] mx-[4px] w-[170px] h-[26px] bg-white border border-dashed border-[#c8c6c4] flex items-center justify-center text-[11.3px] text-[#333] whitespace-nowrap">Add drill-through fields here</div>
    </div>
  )
}

function DataPane() {
  return (
    <div className="flex-1 bg-[#f3f2f1]">
      <div className="h-[38px] pl-[8px] pr-[5px] flex items-center justify-between">
        <span className="text-[15px] font-semibold text-[#252423]">Data</span>
        <ChevronsRight size={20} strokeWidth={1.2} className="text-[#333]" />
      </div>
      <div className="mt-[7px] ml-[4px] w-[172px] h-[27px] pt-[2px] border border-[#8a8886] rounded-[2px] flex items-center pl-[8px] gap-[6px] text-[12.5px] text-[#555]">
        <Search size={15} strokeWidth={1.2} className="text-[#3b6a9a] -scale-x-100" />
        Search
      </div>
      <div className="mt-[9px] h-[24px] pl-[12px] flex items-center text-[11.5px] text-[#444]">
        <ChevronDown size={14} strokeWidth={1} className="text-[#555]" />
        <svg width="13" height="13" viewBox="0 0 13 13" fill="none" stroke="#222" className="ml-[3px]">
          <rect x="0.5" y="0.5" width="12" height="12" rx="2" />
          <path d="M0.5 4.5h12M0.5 8.5h12M4.5 0.5v12M8.5 0.5v12" />
        </svg>
        <span className="ml-[5px]">Product_Sales</span>
      </div>
      {fields.map((f) => (
        <div key={f.name} className="h-[24px] pl-[45px] flex items-center text-[11.5px] text-[#444] whitespace-nowrap">
          <span className="w-[12px] h-[12px] rounded-[2px] border border-[#8a8886] bg-[#f8f8f7] shrink-0" />
          <span className="w-[14px] ml-[7px] shrink-0 flex justify-center">
            {f.icon === "calc" && <Calculator size={15} strokeWidth={1.2} className="text-[#333]" />}
            {f.icon === "sigma" && <Sigma size={15} strokeWidth={1} className="text-[#333]" />}
          </span>
          <span className="ml-[4px]">{f.name}</span>
          {f.warn && <TriangleAlert size={12} strokeWidth={1.2} className="ml-[3px] text-[#d13438]" />}
        </div>
      ))}
    </div>
  )
}

function CenterArea() {
  return (
    <div className="w-[928px] shrink-0 flex flex-col border-r border-[#dcdad8]">
      <div className="flex-1 flex min-h-0">
        <div className="w-[896px] flex flex-col">
          <Canvas />
          <div className="h-[5px] bg-white shrink-0" />
        </div>
        <div className="flex-1 bg-white flex flex-col items-center">
          <ChevronsLeft size={20} strokeWidth={1.2} className="mt-[9px] text-[#333]" />
          <Filter size={13} strokeWidth={1.2} className="mt-[12px] text-[#333]" />
          <span className="mt-[8px] [writing-mode:vertical-rl] text-[14px] leading-none font-semibold text-[#252423]">Filters</span>
        </div>
      </div>
      <PageTabs />
    </div>
  )
}

function QuickPane() {
  return (
    <div className="w-[36px] shrink-0 bg-[#f3f2f1] border-r border-[#dcdad8] flex flex-col items-center">
      <ChevronsLeft size={20} strokeWidth={1.2} className="mt-[9px] text-[#333]" />
      <span className="mt-[11px] [writing-mode:vertical-rl] text-[14.5px] leading-none font-semibold text-[#252423] whitespace-nowrap">Quick measure</span>
    </div>
  )
}

function StatusBar() {
  return (
    <div className="h-[24px] shrink-0 bg-[#f3f2f1] border-t border-[#dcdad8] flex items-center pl-[4px] text-[11.5px] text-[#605e5c]">
      <span>Page 1 of 1</span>
      <div className="ml-auto flex items-center">
        <span className="font-bold text-[#555]">-</span>
        <div className="ml-[5px] w-[100px] h-px bg-[#555] relative">
          <span className="absolute left-[32px] -top-[5px] w-[4px] h-[11px] bg-[#555]" />
          <span className="absolute left-[50px] -top-[2px] w-px h-[5px] bg-[#555]" />
        </div>
        <Plus size={10} strokeWidth={1.5} className="ml-[5px] text-[#555]" />
        <span className="ml-[12px] w-[38px]">70%</span>
        <svg width="16" height="12" viewBox="0 0 16 12" fill="none" stroke="#555" className="ml-[4px]">
          <path d="M.5 3.5v-3h15v3M.5 8.5v3h15v-3" />
          <path d="M3 2.5h2M11 2.5h2M3 9.5h2M11 9.5h2" />
        </svg>
        <span className="ml-[14px] mr-[4px] whitespace-nowrap tracking-[-0.06px]">Update available (click to download)</span>
      </div>
    </div>
  )
}

const TaskSlot = ({ children, on, active }: { children: ReactNode; on?: boolean; active?: boolean }) => (
  <div className={`w-[49px] h-full flex items-center justify-center relative shrink-0 ${active ? "bg-[#5b6a72]" : ""}`}>
    {children}
    {on && <span className={`absolute bottom-0 h-[2px] bg-[#76b9ed] ${active ? "left-0 right-0" : "left-[4px] right-[4px]"}`} />}
  </div>
)

const TrayIcon = ({ w = 24, children }: { w?: number; children: ReactNode }) => (
  <div style={{ width: w }} className="flex items-center justify-center shrink-0">{children}</div>
)

function Penguins() {
  const Bird = ({ x, flip }: { x: number; flip?: boolean }) => (
    <g transform={`translate(${x} 2) scale(${flip ? -1 : 1} 1)`}>
      <ellipse cx="0" cy="20" rx="7.5" ry="14" fill="#3b4048" />
      <ellipse cx="1" cy="23" rx="4.5" ry="10" fill="#eef2f5" />
      <circle cx="1" cy="6" r="4.5" fill="#2c3036" />
      <path d="M5 5l4 1.5-4 1z" fill="#e8873a" />
      <path d="M-3 34h6v2h-6z" fill="#e8873a" />
    </g>
  )
  return (
    <svg width="68" height="39" viewBox="0 0 68 40" className="shrink-0">
      <path d="M6 30c-6-6 0-14 8-14 2-10 14-14 22-12 8-2 20 4 20 12 8 0 12 8 8 14z" fill="#a9d6f5" />
      <ellipse cx="34" cy="36" rx="30" ry="3.5" fill="#d6ecfa" />
      <Bird x={19} />
      <Bird x={47} flip />
      <path d="M28 30V17l6 7 6-7v13h-3v-6l-3 4-3-4v6z" fill="#1b75bc" />
    </svg>
  )
}

function Taskbar() {
  return (
    <div className="h-[41px] shrink-0 border-t border-black bg-linear-to-r from-[#213641] to-[#1a2a3f] flex items-center text-white">
      <div className="w-[48px] flex justify-center shrink-0 pr-[4px]">
        <svg width="16" height="16" viewBox="0 0 16 16" fill="#fff">
          <path d="M0 2.2l6.8-1v6.4H0zM7.6 1.1L16 0v7.6H7.6zM0 8.4h6.8v6.4l-6.8-1zM7.6 8.4H16V16l-8.4-1.1z" />
        </svg>
      </div>
      <div className="w-[288px] h-full shrink-0 bg-[#f2f2f2] border border-[#9a9a9a] flex items-center pl-[12px] text-[#2b2b2b] text-[14px]">
        <Search size={17} strokeWidth={1.3} className="-scale-x-100 text-[#222]" />
        <span className="ml-[10px] w-[168px]">Type here to search</span>
        <Penguins />
      </div>
      <TaskSlot>
        <svg width="17" height="17" viewBox="0 0 17 17" fill="none" stroke="#fff" className="-translate-x-[1px]">
          <path d="M1 1.5h10M1 15.5h10M2 5.5h8v6H2zM14 1v3M14 6.5v9" strokeWidth="1.2" />
        </svg>
      </TaskSlot>
      <div className="w-[2px]" />
      <TaskSlot on>
        <svg width="22" height="22" viewBox="0 0 22 22">
          <path d="M0 3h8l2 2h12v15H0z" fill="#f2b73f" />
          <path d="M0 7h22v13H0z" fill="#ffd768" />
          <rect x="6" y="13" width="10" height="7" fill="#2f8fd6" />
          <rect x="9" y="16" width="4" height="4" fill="#bfe0f5" />
        </svg>
      </TaskSlot>
      <TaskSlot>
        <svg width="24" height="28" viewBox="0 0 24 28">
          <path d="M7 7V3a2 2 0 0 1 2-2h6a2 2 0 0 1 2 2v4" fill="none" stroke="#28a8ea" strokeWidth="1.6" />
          <rect x="0" y="6" width="24" height="22" rx="3" fill="#f4f4f4" />
          <rect x="7" y="11" width="4.5" height="4.5" fill="#f25022" />
          <rect x="12.5" y="11" width="4.5" height="4.5" fill="#7fba00" />
          <rect x="7" y="16.5" width="4.5" height="4.5" fill="#00a4ef" />
          <rect x="12.5" y="16.5" width="4.5" height="4.5" fill="#ffb900" />
        </svg>
      </TaskSlot>
      <TaskSlot>
        <svg width="24" height="24" viewBox="0 0 24 24">
          <path d="M12 0l12 9v15H0V9z" fill="#0a5ea8" />
          <path d="M0 9l12 8 12-8v15H0z" fill="#1f9be8" />
          <path d="M3 7h18v3l-9 6-9-6z" fill="#e4f4fd" />
        </svg>
      </TaskSlot>
      <TaskSlot on active>
        <svg width="20" height="27" viewBox="0 0 20 27">
          <rect x="12" y="0" width="8" height="27" rx="1" fill="#d39c0e" />
          <rect x="6" y="8" width="8" height="19" rx="1" fill="#eec22f" />
          <rect x="0" y="15" width="8" height="12" rx="1" fill="#f6dc6b" />
        </svg>
      </TaskSlot>
      <TaskSlot on>
        <Settings size={21} strokeWidth={2.6} />
      </TaskSlot>
      <TaskSlot on>
        <svg width="24" height="24" viewBox="0 0 24 24">
          <circle cx="12" cy="12" r="12" fill="#e33b2e" />
          <path d="M12 12L1.6 18A12 12 0 0 0 12 24l5-8z" fill="#2aa24a" />
          <path d="M12 6h10.7A12 12 0 0 1 12 24l5.2-9z" fill="#fbc02d" />
          <circle cx="12" cy="12" r="5.5" fill="#fff" />
          <circle cx="12" cy="12" r="4.3" fill="#2f80ed" />
        </svg>
      </TaskSlot>
      <div className="ml-auto flex items-center h-full w-[481px] shrink-0 text-[13.5px]">
        <div className="w-[35px] relative pl-[3px]">
          <svg width="24" height="16" viewBox="0 0 24 16">
            <path d="M5 16a4.5 4.5 0 0 1-.5-9A6 6 0 0 1 16 6a5 5 0 0 1 3 10z" fill="#bcdcf7" />
          </svg>
          <span className="absolute left-[15px] -top-[7px] w-[11px] h-[11px] rounded-full bg-[#c5281c] text-[8px] leading-[11px] text-center">1</span>
        </div>
        <span className="w-[38px]">33°C</span>
        <span className="w-[105px] whitespace-nowrap">Mostly cloudy</span>
        <TrayIcon>
          <ChevronUp size={16} strokeWidth={1.3} />
        </TrayIcon>
        <TrayIcon>
          <svg width="12" height="16" viewBox="0 0 12 16" fill="none" stroke="#ddd">
            <rect x="0.5" y="4.5" width="7" height="7" rx="1" />
            <path d="M8 7l3.5-2v6L8 9M2 2c1-1 4-1 5 0M2 14c1 1 4 1 5 0" />
          </svg>
        </TrayIcon>
        <TrayIcon>
          <svg width="17" height="16" viewBox="0 0 17 16" fill="none" stroke="#ddd">
            <path d="M.5 3.5L15.5 1v11l-15 1.5zM5 9c1-2 3-3 5-3M9 4l2 2-2 2" />
            <circle cx="13" cy="13" r="3" fill="#e81123" stroke="none" />
          </svg>
        </TrayIcon>
        <TrayIcon>
          <svg width="16" height="12" viewBox="0 0 16 12" fill="none" stroke="#ddd">
            <rect x="5.5" y="2.5" width="10" height="8" rx="1" />
            <rect x="7" y="4" width="7" height="5" fill="#ddd" stroke="none" />
            <path d="M0 6h3M2 3v2M4 3v2" />
          </svg>
        </TrayIcon>
        <TrayIcon w={25}>
          <svg width="14" height="13" viewBox="0 0 14 13" fill="none" stroke="#ddd">
            <path d="M1 12A11 11 0 0 1 12 1M4 12a8 8 0 0 1 8-8M7 12a5 5 0 0 1 5-5M10 12a2 2 0 0 1 2-2" strokeDasharray="1.5 1" />
          </svg>
        </TrayIcon>
        <TrayIcon>
          <svg width="16" height="13" viewBox="0 0 16 13" fill="none" stroke="#ddd">
            <path d="M1 4.5h2.5L7 1v11L3.5 8.5H1zM9.5 4a3.5 3.5 0 0 1 0 5M12 2a6 6 0 0 1 0 9" />
          </svg>
        </TrayIcon>
        <span className="w-[33px] text-center text-[11.5px]">ENG</span>
        <div className="w-[72px] flex flex-col items-center text-[11.5px] leading-[19px]">
          <span>15:20</span>
          <span>25-04-2025</span>
        </div>
        <div className="w-[40px] relative flex justify-center">
          <svg width="17" height="15" viewBox="0 0 17 15" className="-translate-x-[3px]">
            <path d="M0 0h17v12H9l-3 3v-3H0z" fill="#f5f5f5" />
            <path d="M3 3h11M3 6h11M3 9h7" stroke="#333" />
          </svg>
          <span className="absolute left-[20px] top-[5px] w-[16px] h-[16px] rounded-full bg-[#333] border border-[#777] text-[10px] leading-[14px] text-center font-bold">3</span>
        </div>
        <div className="ml-[9px] w-px h-full bg-[#5c6b78]" />
      </div>
    </div>
  )
}

export default function App() {
  return (
    <div className="w-[1366px] h-[768px] overflow-hidden flex flex-col font-['Noto_Sans',sans-serif]">
      <TitleBar />
      <Ribbon />
      <div className="flex-1 flex min-h-0">
        <LeftRail />
        <CenterArea />
        <QuickPane />
        <VizPane />
        <DataPane />
      </div>
      <StatusBar />
      <Taskbar />
    </div>
  )
}
